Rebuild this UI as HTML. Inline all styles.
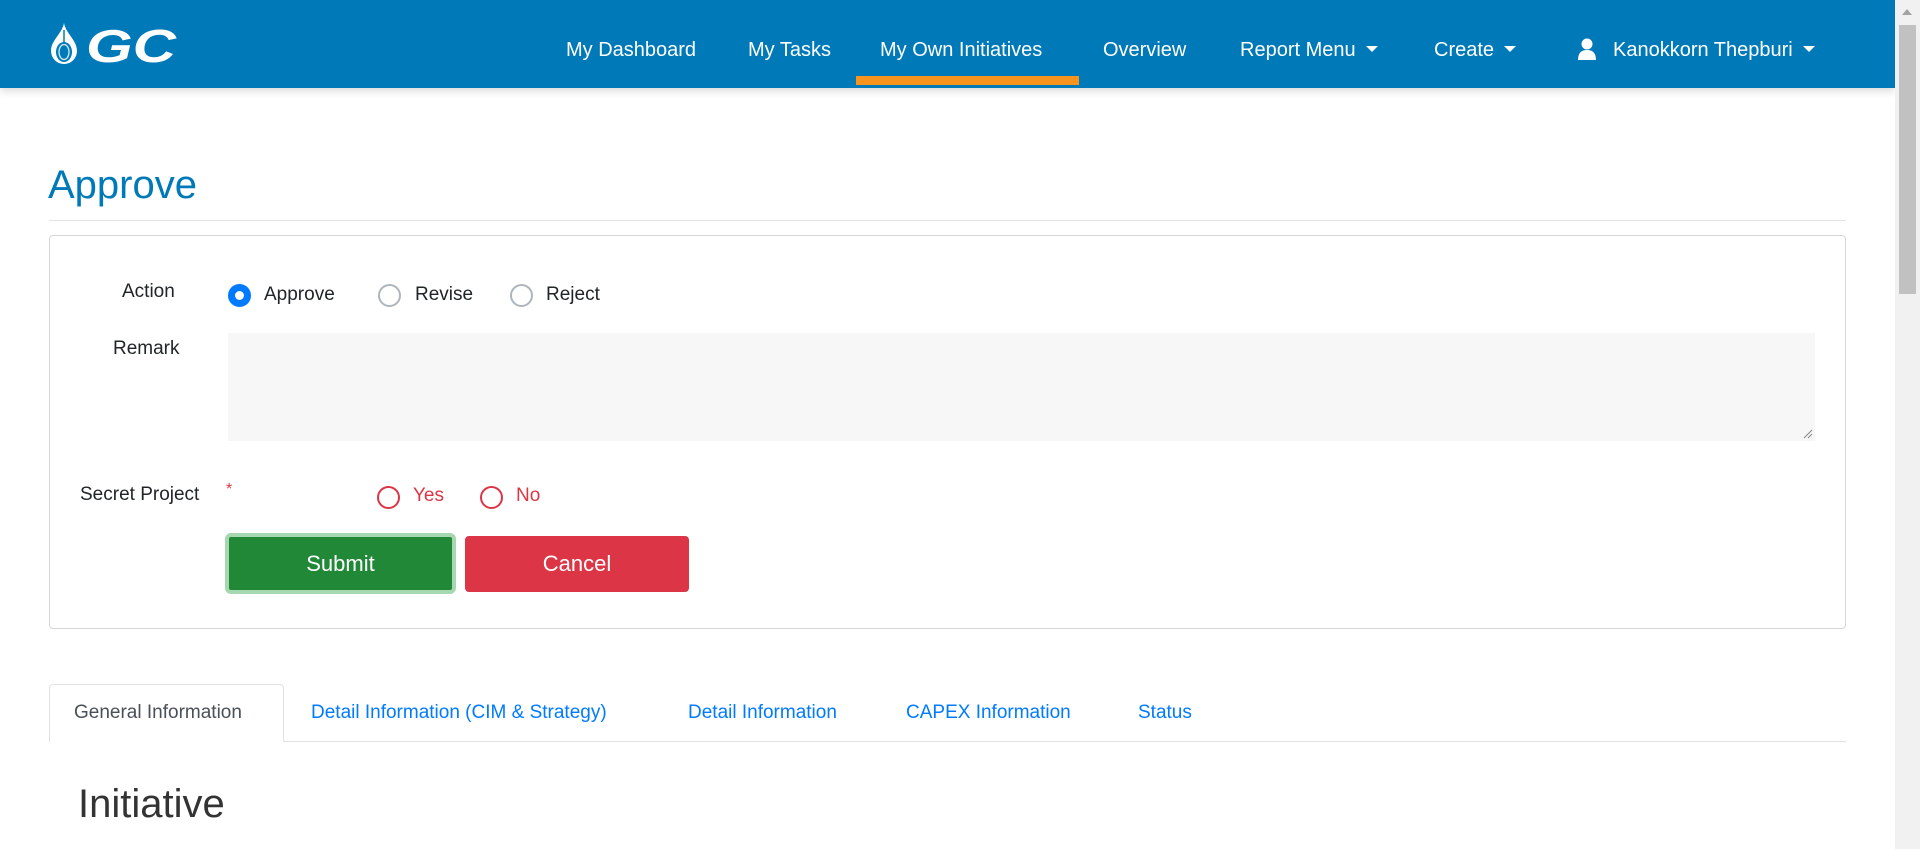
<!DOCTYPE html>
<html><head><meta charset="utf-8"><style>
*{box-sizing:border-box;margin:0;padding:0}
body{width:1920px;height:849px;overflow:hidden;background:#fff;font-family:"Liberation Sans",sans-serif;color:#212529;position:relative}
.hdr{position:absolute;left:0;top:0;width:1895px;height:88px;background:#0079b8;box-shadow:0 3px 8px rgba(0,0,0,.15)}
.nav{position:absolute;top:39px;color:#fff;font-size:20px;white-space:nowrap}
.car{display:inline-block;border-left:6px solid transparent;border-right:6px solid transparent;border-top:6px solid #fff;vertical-align:middle;margin-left:10px;margin-top:-4px}
.sb{position:absolute;left:1895px;top:0;width:25px;height:849px;background:#f1f1f1}
.abs{position:absolute;white-space:nowrap}
.lbl{font-size:19px;color:#212529}
.rad{position:absolute;width:23px;height:23px;border-radius:50%;border:2px solid #adb5bd;background:#fff}
.rr{border-color:#dc3545}
.btn{position:absolute;color:#fff;font-size:22px;text-align:center;border-radius:4px}
.tab{position:absolute;top:702px;font-size:19px;color:#007bff;white-space:nowrap}
</style></head><body>
<div class="hdr">
<svg style="position:absolute;left:48px;top:22px" width="132" height="44" viewBox="0 0 132 44">
<path d="M16 1 C14 12 3 18 3 29 A13 13 0 0 0 29 29 C29 18 18 12 16 1Z" fill="#fff"/>
<ellipse cx="16" cy="30" rx="8" ry="10" fill="#0079b8"/>
<ellipse cx="16" cy="30" rx="5" ry="7.5" fill="none" stroke="#bfe2f4" stroke-width="1.4"/>
<path d="M16 8 L16 22" stroke="#0079b8" stroke-width="1.5"/>
<text x="38" y="40" font-family="Liberation Sans" font-weight="bold" font-style="italic" font-size="46" fill="#fff" textLength="90" lengthAdjust="spacingAndGlyphs">GC</text>
</svg>
<div class="nav" style="left:566px">My Dashboard</div>
<div class="nav" style="left:748px">My Tasks</div>
<div class="nav" style="left:880px">My Own Initiatives</div>
<div style="position:absolute;left:856px;top:76px;width:223px;height:9px;background:#f7941d"></div>
<div class="nav" style="left:1103px">Overview</div>
<div class="nav" style="left:1240px">Report Menu<span class="car"></span></div>
<div class="nav" style="left:1434px">Create<span class="car"></span></div>
<svg style="position:absolute;left:1577px;top:38px" width="20" height="22" viewBox="0 0 20 22"><circle cx="10" cy="6" r="5.5" fill="#fff"/><path d="M1 22 Q1 12 10 12 Q19 12 19 22Z" fill="#fff"/></svg>
<div class="nav" style="left:1613px">Kanokkorn Thepburi<span class="car"></span></div>
</div>
<div class="sb"><div style="position:absolute;left:4px;top:25px;width:17px;height:269px;background:#c1c1c1"></div><div style="position:absolute;left:7px;top:9px;border-left:5px solid transparent;border-right:5px solid transparent;border-bottom:6px solid #a3a3a3"></div></div>

<div class="abs" style="left:48px;top:163px;font-size:40px;color:#0079b8">Approve</div>
<div style="position:absolute;left:49px;top:220px;width:1797px;height:1px;background:#e2e2e2"></div>
<div style="position:absolute;left:49px;top:235px;width:1797px;height:394px;border:1px solid #d6d6d6;border-radius:4px"></div>

<div class="abs lbl" style="left:122px;top:281px">Action</div>
<div class="rad" style="left:228px;top:284px;border:7px solid #007bff"></div>
<div class="abs lbl" style="left:264px;top:284px">Approve</div>
<div class="rad" style="left:378px;top:284px"></div>
<div class="abs lbl" style="left:415px;top:284px">Revise</div>
<div class="rad" style="left:510px;top:284px"></div>
<div class="abs lbl" style="left:546px;top:284px">Reject</div>

<div class="abs lbl" style="left:113px;top:338px">Remark</div>
<div style="position:absolute;left:228px;top:333px;width:1587px;height:108px;background:#f7f7f7"></div>
<svg style="position:absolute;left:1803px;top:429px" width="10" height="10"><path d="M1 9L9 1M5 9L9 5" stroke="#888"/></svg>

<div class="abs lbl" style="left:80px;top:484px">Secret Project</div>
<div class="abs" style="left:226px;top:481px;color:#dc3545;font-size:16px">*</div>
<div class="rad rr" style="left:377px;top:486px"></div>
<div class="abs lbl" style="left:413px;top:485px;color:#dc3545">Yes</div>
<div class="rad rr" style="left:480px;top:486px"></div>
<div class="abs lbl" style="left:516px;top:485px;color:#dc3545">No</div>

<div class="btn" style="left:225px;top:533px;width:231px;height:61px;border:4px solid #a5d8b0;border-radius:6px;background:#218838;line-height:53px">Submit</div>
<div class="btn" style="left:465px;top:536px;width:224px;height:56px;background:#dc3545;line-height:56px">Cancel</div>

<div style="position:absolute;left:49px;top:741px;width:1797px;height:1px;background:#dee2e6"></div>
<div style="position:absolute;left:49px;top:684px;width:235px;height:58px;border:1px solid #dee2e6;border-bottom:none;background:#fff;border-radius:4px 4px 0 0"></div>
<div class="tab" style="left:74px;color:#495057">General Information</div>
<div class="tab" style="left:311px">Detail Information (CIM &amp; Strategy)</div>
<div class="tab" style="left:688px">Detail Information</div>
<div class="tab" style="left:906px">CAPEX Information</div>
<div class="tab" style="left:1138px">Status</div>

<div class="abs" style="left:78px;top:782px;font-size:40px;color:#333">Initiative</div>
</body></html>
